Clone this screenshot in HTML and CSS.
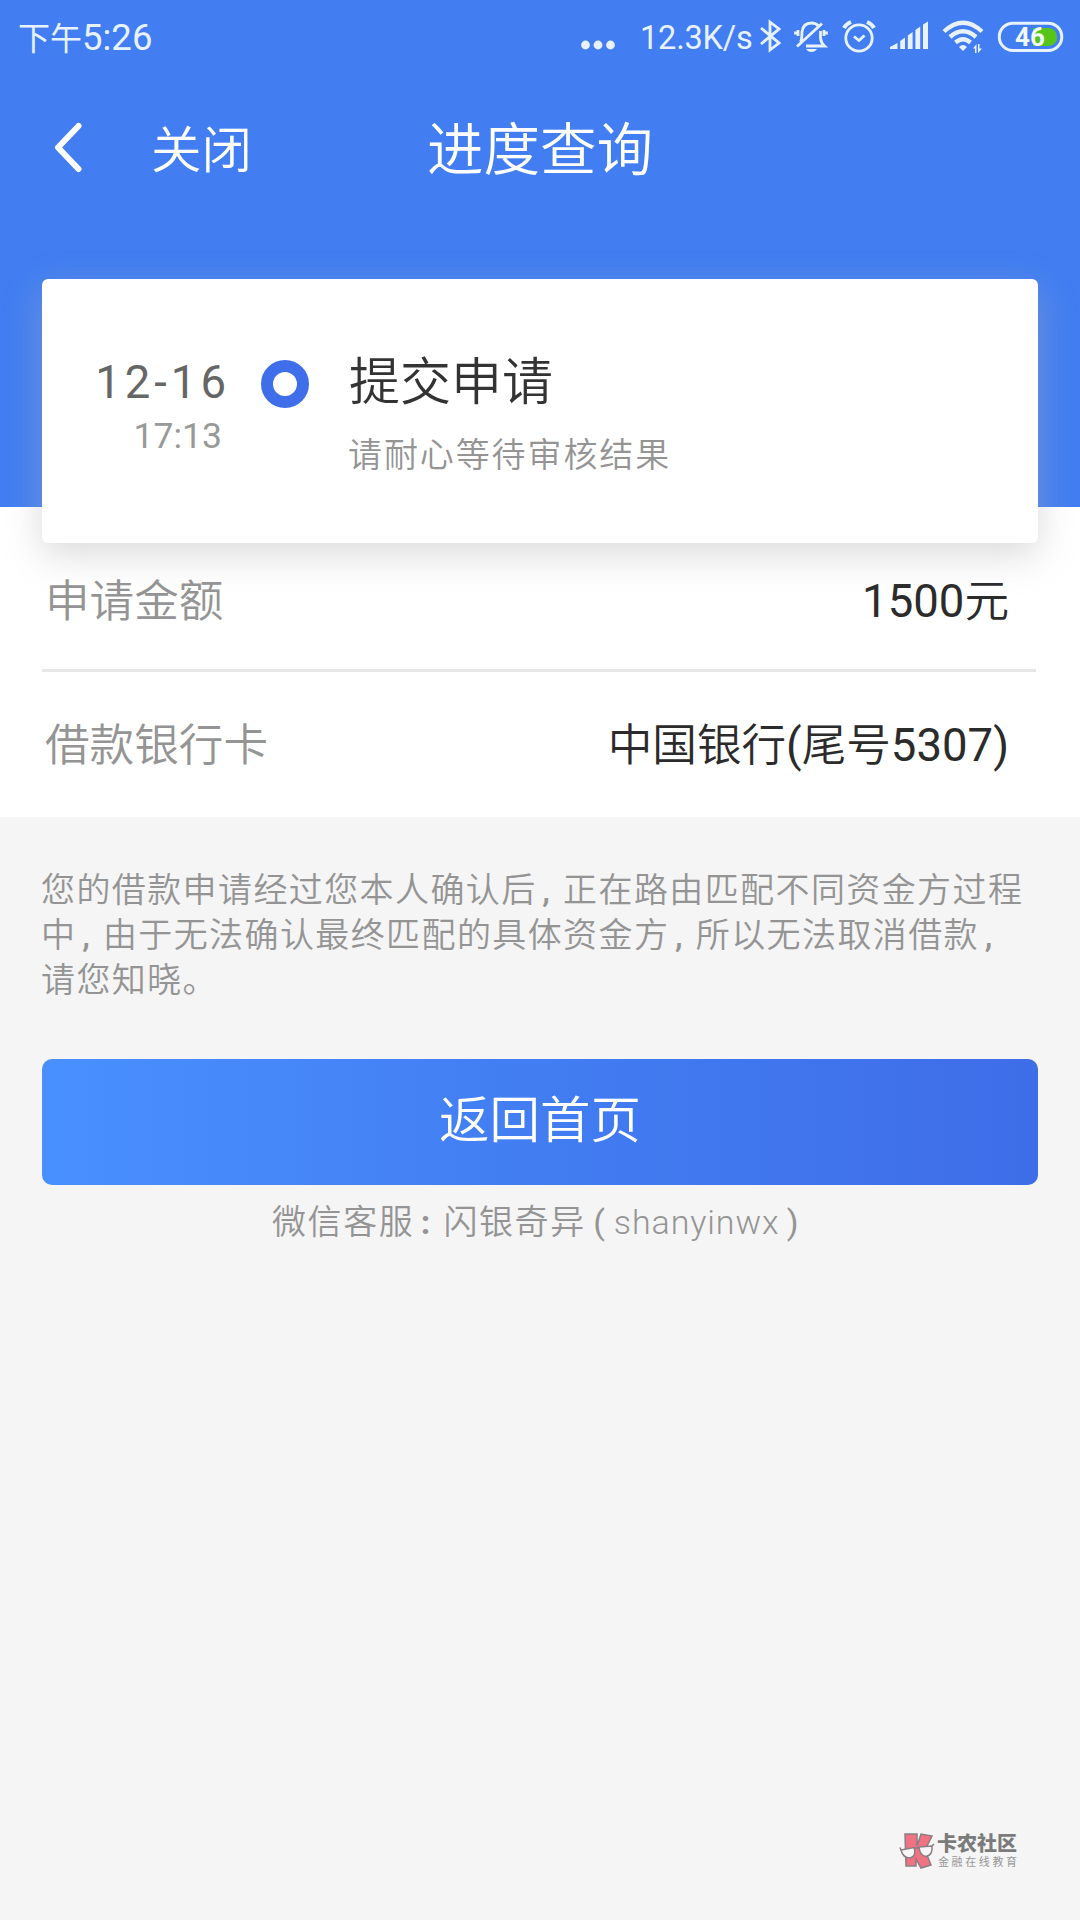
FILE: index.html
```html
<!DOCTYPE html>
<html lang="zh-CN">
<head>
<meta charset="utf-8">
<title>进度查询</title>
<link rel="stylesheet" href="styles.css">
</head>
<body>
<header class="hero">
  <div class="status">
    <div class="clock"><span class="clock-zh">下午</span>5:26</div>
    <svg class="dots" width="34" height="10" viewBox="0 0 34 10"><circle cx="4.5" cy="5" r="4.4"/><circle cx="17" cy="5" r="4.4"/><circle cx="29.5" cy="5" r="4.4"/></svg>
    <span class="speed">12.3K/s</span>
    <svg class="icon bluetooth" width="22" height="34" viewBox="0 0 22 34"><path d="M2 9L20 24L11 31V3L20 10L2 25"/></svg>
    <svg class="icon bell" width="34" height="34" viewBox="0 0 34 34"><path d="M6.500 23C8 20 8 18 8 13Q9 4 17.500 4Q22 4 24.500 7M26.500 12V19Q27 24 30.500 27H12M3 27.500L28 4.500M4 11V17M1.500 12.500V15.500M30 11V17M32.500 12.500V15.500"/><path class="solid" d="M12 30H23Q21 33 17.500 33Q14 33 12 30Z"/></svg>
    <svg class="icon alarm" width="34" height="34" viewBox="0 0 34 34"><circle cx="17" cy="19" r="13.200"/><path d="M12 17.500L17 21.500L22.500 16.500"/><path class="thick" d="M2 9Q4 5 9 3M32 9Q30 5 25 3"/></svg>
    <svg class="icon signal" width="40" height="34" viewBox="0 0 40 34"><path class="solid" d="M1 30V28L8.500 24V30ZM11.200 22L16 18.500V30H11.200ZM18.800 16.500L23.600 13V30H18.800ZM26.400 11L31.200 7.500V30H26.400ZM34 5.500L39 2.500V30H34Z"/></svg>
    <svg class="icon wifi" width="42" height="34" viewBox="0 0 42 34"><path class="band" d="M2 12.500Q21-5 40 12.500M8 18Q21 6.500 34 18M13.500 23.500Q21 17 28.500 23.500"/><path class="solid" d="M17 28Q21 24 25 28L21 32ZM31 29.500L34.500 25V34H33V29.500ZM36 25H37.500V29.500H40L36 34Z"/></svg>
    <svg class="icon battery" width="68" height="34" viewBox="0 0 68 34"><path class="charge" d="M36 9H52Q60 10 60 18Q60 26 52 27H36Z"/><rect x="2.300" y="4.200" width="62.500" height="27.300" rx="13.600"/><text x="33" y="26.500">46</text></svg>
  </div>
  <nav class="nav">
    <svg class="back" width="30" height="52" viewBox="0 0 30 52"><path d="M25.500 4L5 25.500L25.500 47"/></svg>
    <span class="close">关闭</span>
    <h1>进度查询</h1>
  </nav>
</header>
<section class="card">
  <div class="when"><span class="date">12-16</span><span class="time">17:13</span></div>
  <span class="node"></span>
  <div class="step"><h2>提交申请</h2><p>请耐心等待审核结果</p></div>
</section>
<section class="details">
  <div class="row"><span class="label">申请金额</span><span class="value"><b>1500</b>元</span></div>
  <div class="row"><span class="label">借款银行卡</span><span class="value">中国银行<b>(</b>尾号<b>5307)</b></span></div>
</section>
<main class="foot">
  <p class="notice">您的借款申请经过您本人确认后<i>,</i>正在路由匹配不同资金方过程<br>中<i>,</i>由于无法确认最终匹配的具体资金方<i>,</i>所以无法取消借款<i>,</i><br>请您知晓。</p>
  <button class="home">返回首页</button>
  <p class="service">微信客服<i>:</i>闪银奇异<b>(</b><span>shanyinwx</span><b>)</b></p>
</main>
<footer class="brand">
  <svg width="36" height="38" viewBox="0 0 36 38"><path class="letter" d="M6 2H18V14L22 2L33 4L26 18L32 33L22 36L17 27V34H7Z"/><path class="lens" d="M2 18L15 15.500Q18 24 11 26Q4 26 2 18ZM20 15L33 14Q34 23 27 24.500Q21 24 20 15Z"/><path class="bridge" d="M15 16.500L20 15.500M1 15.500L2 18M33 14L35 12"/></svg>
  <div class="brand-text"><strong>卡农社区</strong><small>金融在线教育</small></div>
</footer>
</body>
</html>
```

FILE: styles.css
```css
* { box-sizing: border-box; margin: 0; padding: 0; }
body {
  width: 1080px; height: 1920px; overflow: hidden;
  display: flex; flex-direction: column;
  background: #f5f5f5;
  font-family: Roboto, "Noto Sans CJK SC", sans-serif;
  font-weight: 400; color: #333;
}
i, b { font-style: normal; font-weight: 400; display: inline-block; text-align: center; }
.hero { height: 507px; flex: none; background: #427ef2; color: #fff; }
.status { height: 72px; display: flex; align-items: center; padding: 1px 0 0 18px; color: #e8f2ff; }
.clock { width: 563px; padding-top: 3px; font-size: 36.5px; line-height: 72px; white-space: nowrap; }
.clock-zh { font-size: 32px; font-weight: 400; }
.status svg { fill: #e8f2ff; flex: none; }
.dots { margin-top: 17px; }
.speed { width: 112px; margin-left: 25px; padding-top: 3px; font-size: 32.5px; line-height: 72px; letter-spacing: -.2px; white-space: nowrap; }
.status .icon { fill: none; stroke: #e8f2ff; stroke-width: 2.8; position: static; margin-bottom: 1px; }
.icon .solid { fill: #e8f2ff; stroke: none; }
.status .thick { stroke-width: 4; }
.icon .band { stroke-width: 4.4; }
.bluetooth { margin-left: 7px; }
.bell { margin-left: 13px; }
.alarm { margin-left: 14px; }
.signal { margin-left: 13px; }
.wifi { margin-left: 13px; }
.battery { margin-left: 13px; }
.battery rect { stroke-width: 3; }
.battery .charge { fill: #55c51b; stroke: none; }
.battery text { fill: #f2f8ff; stroke: none; font-size: 26px; font-weight: 700; text-anchor: middle; }
.nav { height: 158px; display: grid; grid-template-columns: 98px 276px 1fr; align-items: center; padding: 0 0 0 53px; }
.back { fill: none; stroke: #fff; stroke-width: 6; stroke-linecap: round; stroke-linejoin: round; margin-bottom: 6px; }
.close { font-size: 50.5px; line-height: 60px; font-weight: 350; }
.nav h1 { font-size: 56.5px; line-height: 70px; font-weight: 350; }
.card {
  position: relative; z-index: 1; flex: none; width: 996px; height: 264px; margin: -228px 42px 0;
  padding: 69px 0 0 48px; display: flex; align-items: flex-start;
  background: #fff; border-radius: 6px; box-shadow: 0 12px 36px rgba(175, 175, 175, .45);
}
.when { width: 171px; padding-right: 39px; display: flex; flex-direction: column; align-items: flex-end; }
.date { font-size: 45.5px; line-height: 70px; letter-spacing: 4px; color: #666; margin-right: -8px; }
.time { font-size: 35.5px; line-height: 36px; color: #999; }
.node { width: 48px; height: 48px; margin-top: 12px; border: 12px solid #3e6eea; border-radius: 50%; }
.step { margin-left: 39px; }
.step h2 { font-size: 51px; line-height: 70px; font-weight: 350; padding-left: 1px; }
.step p { font-size: 34px; line-height: 50px; margin-top: 12px; letter-spacing: 1.9px; font-weight: 350; color: #949494; }
/* Runs up behind the card so that its shadow falls on white */
.details { flex: none; height: 310px; margin-top: -36px; padding: 36px 44px 0 42px; background: #fff; }
.row { height: 129px; display: flex; justify-content: space-between; align-items: center; padding: 0 27px 18px 3px; font-size: 44.6px; font-weight: 350; white-space: nowrap; border-bottom: 3px solid #e7e7e7; }
.row + .row { height: 145px; border: 0; padding-bottom: 6px; }
.label { color: #949494; }
.value { color: #2b2b2b; }
.value b { font-size: 45.5px; }
.foot { padding: 0 42px 0 41px; color: #949494; font-weight: 350; }
.notice { padding-top: 51px; height: 242px; font-size: 34px; line-height: 45px; letter-spacing: 1.4px; white-space: nowrap; }
.notice i { width: 26.5px; padding-right: 6px; font-weight: 500; }
.home { display: block; width: 996px; height: 126px; margin-left: 1px; padding-bottom: 12px; border: 0; border-radius: 10px; background: linear-gradient(90deg, #4990ff, #427df2 50%, #3e6de8); color: #fff; font: 350 50.5px/1 "Noto Sans CJK SC", sans-serif; }
.service { padding: 12px 0 0 231px; font-size: 34px; line-height: 50px; letter-spacing: 1.6px; white-space: nowrap; }
.service i { width: 28px; padding-right: 4px; margin-right: 1px; font-weight: 700; }
.service b { width: 28px; }
.service span { font-weight: 300; letter-spacing: .9px; }
.brand { margin: auto 0 50px 899px; height: 38px; display: flex; align-items: flex-start; opacity: .85; }
.brand svg { flex: none; stroke: #776b70; stroke-width: 1.5; }
.brand .letter { fill: #f05c70; }
.brand .lens { fill: #f7f7f7; }
.brand .bridge { fill: none; }
.brand-text { display: flex; flex-direction: column; margin: 1px 0 0 2px; white-space: nowrap; }
.brand strong { font-size: 20px; line-height: 22px; font-weight: 900; color: #666; }
.brand small { font-size: 11px; line-height: 15px; letter-spacing: 2.6px; color: #888; margin-left: 1px; }
```
